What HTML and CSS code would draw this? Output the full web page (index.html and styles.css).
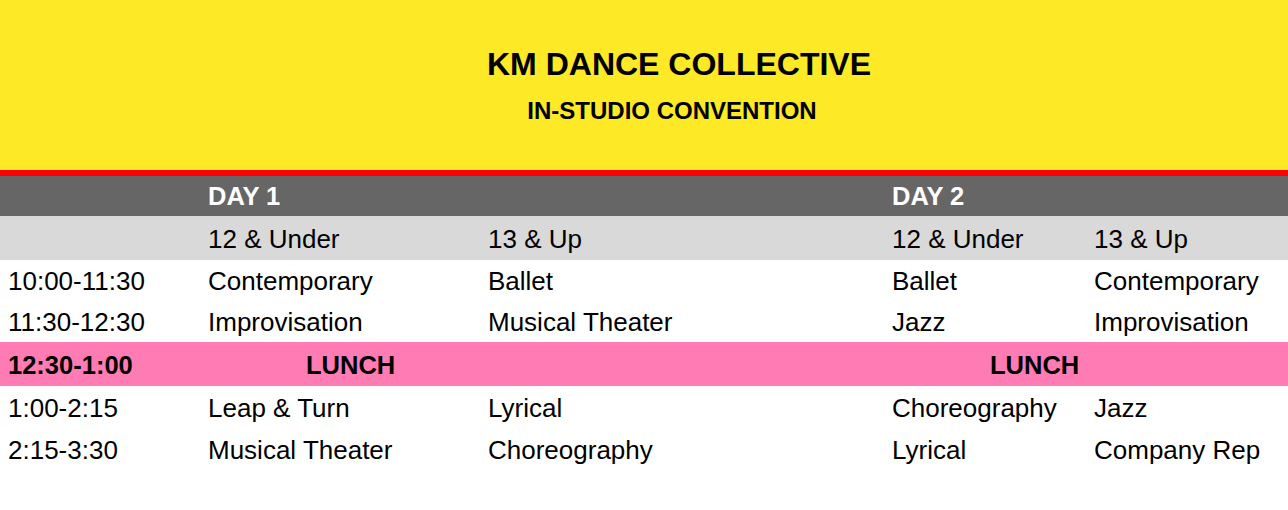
FILE: index.html
```html
<!DOCTYPE html>
<html>
<head>
<meta charset="utf-8">
<link rel="stylesheet" href="styles.css">
</head>
<body>
<header class="banner">
  <h1 class="title">KM DANCE COLLECTIVE</h1>
  <h2 class="subtitle">IN-STUDIO CONVENTION</h2>
</header>
<div class="schedule">
  <div class="row row-day">
    <div class="cell"></div>
    <div class="cell">DAY 1</div>
    <div class="cell"></div>
    <div class="cell">DAY 2</div>
    <div class="cell"></div>
  </div>
  <div class="row row-age">
    <div class="cell"></div>
    <div class="cell">12 &amp; Under</div>
    <div class="cell">13 &amp; Up</div>
    <div class="cell">12 &amp; Under</div>
    <div class="cell">13 &amp; Up</div>
  </div>
  <div class="row row-short">
    <div class="cell">10:00-11:30</div>
    <div class="cell">Contemporary</div>
    <div class="cell">Ballet</div>
    <div class="cell">Ballet</div>
    <div class="cell">Contemporary</div>
  </div>
  <div class="row row-short">
    <div class="cell">11:30-12:30</div>
    <div class="cell">Improvisation</div>
    <div class="cell">Musical Theater</div>
    <div class="cell">Jazz</div>
    <div class="cell">Improvisation</div>
  </div>
  <div class="row row-lunch">
    <div class="cell">12:30-1:00</div>
    <div class="cell lunch">LUNCH</div>
    <div class="cell"></div>
    <div class="cell lunch">LUNCH</div>
    <div class="cell"></div>
  </div>
  <div class="row">
    <div class="cell">1:00-2:15</div>
    <div class="cell">Leap &amp; Turn</div>
    <div class="cell">Lyrical</div>
    <div class="cell">Choreography</div>
    <div class="cell">Jazz</div>
  </div>
  <div class="row">
    <div class="cell">2:15-3:30</div>
    <div class="cell">Musical Theater</div>
    <div class="cell">Choreography</div>
    <div class="cell">Lyrical</div>
    <div class="cell">Company Rep</div>
  </div>
</div>
</body>
</html>
```
FILE: styles.css
```css
* { box-sizing: border-box; }
html, body {
  margin: 0;
  padding: 0;
  background: #ffffff;
  font-family: "Liberation Sans", Arial, sans-serif;
  color: #000000;
}
.banner {
  height: 176px;
  background: #fde925;
  border-bottom: 6px solid #ff0000;
  display: flex;
  flex-direction: column;
  align-items: center;
  padding-top: 45px;
}
.title {
  margin: 0;
  font-size: 32px;
  font-weight: bold;
  line-height: 38px;
  padding-left: 70px;
}
.subtitle {
  margin: 14px 0 0 0;
  font-size: 24px;
  font-weight: bold;
  line-height: 28px;
  padding-left: 56px;
}
.row {
  display: grid;
  grid-template-columns: 200px 280px 404px 202px 202px;
  height: 42px;
  align-items: center;
  font-size: 26px;
  padding-top: 2px;
}
.row-short {
  height: 41px;
}
.cell {
  padding-left: 8px;
  white-space: nowrap;
}
.row-day {
  background: #666666;
  color: #ffffff;
  font-weight: bold;
  height: 40px;
  font-size: 25.5px;
  padding-top: 0;
}
.row-age {
  background: #d9d9d9;
  height: 44px;
}
.row-lunch {
  background: #ff7bb3;
  font-weight: bold;
  height: 44px;
  font-size: 25.5px;
}
.lunch {
  padding-left: 106px;
}
```
